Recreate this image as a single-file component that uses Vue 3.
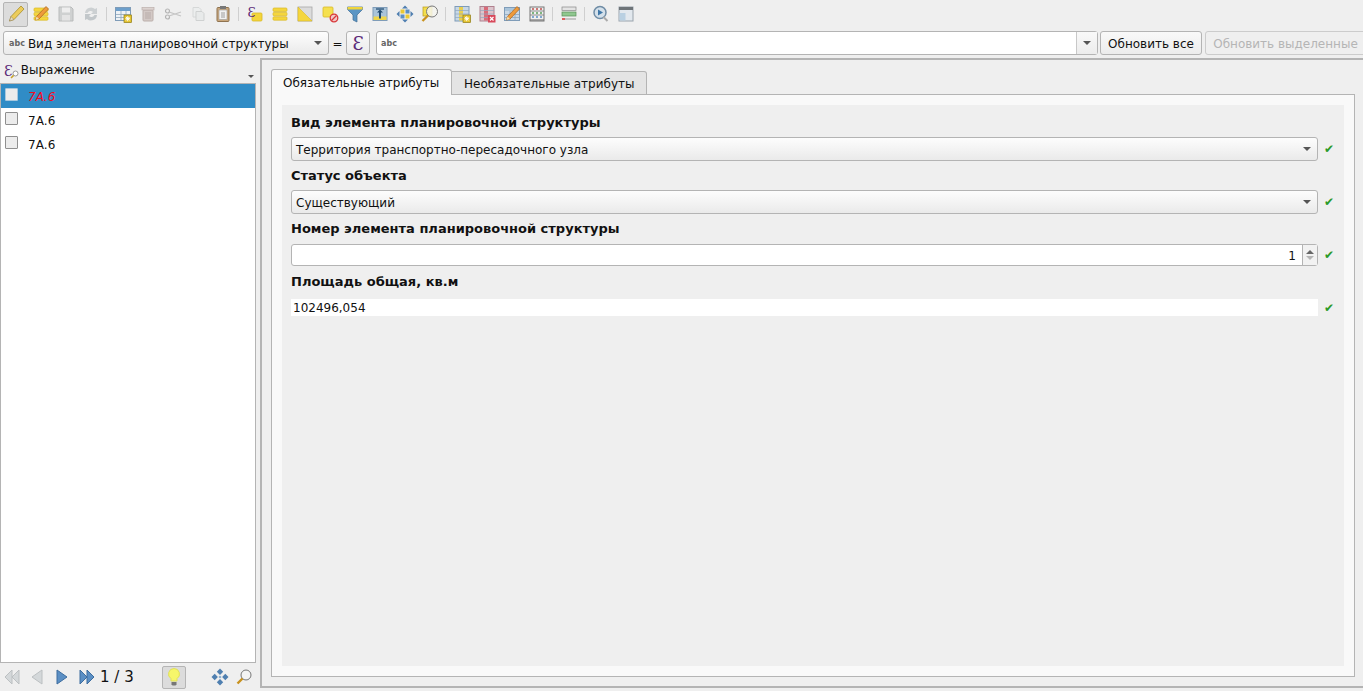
<template>
  <div class="window">
    <div class="toolbar">
      <template v-for="(t, i) in tools" :key="i">
        <span v-if="t === null" class="sep"></span>
        <button v-else class="tool" :class="{ active: i === 0 }">
          <svg width="20" height="20" viewBox="0 0 20 20" v-html="t"></svg>
        </button>
      </template>
    </div>

    <div class="updatebar">
      <div class="combo field-combo">
        <span class="abc">abc</span>
        <span class="combo-text">Вид элемента планировочной структуры</span>
        <span class="arrow"></span>
      </div>
      <span class="eq">=</span>
      <button class="btn eps-btn"><span class="eps">Ɛ</span></button>
      <div class="expr">
        <span class="abc abc-input">abc</span>
        <span class="expr-drop"><span class="arrow"></span></span>
      </div>
      <button class="btn update">Обновить все</button>
      <button class="btn update disabled">Обновить выделенные</button>
    </div>

    <div class="main">
      <aside class="side">
        <div class="side-head">
          <span class="eps small">Ɛ</span>
          <svg class="mini-lens" width="9" height="9" viewBox="0 0 9 9">
            <circle cx="5.5" cy="3.5" r="2.5" fill="#fff" stroke="#999" />
            <path d="M3.6 5.4 1 8" stroke="#c9a227" stroke-width="1.5" />
          </svg>
          <span class="side-title">Выражение</span>
          <span class="arrow tiny"></span>
        </div>
        <ul class="list">
          <li v-for="(r, i) in rows" :key="i" class="row" :class="{ selected: i === 0 }">
            <span class="check"></span>
            <span>{{ r }}</span>
          </li>
        </ul>
        <div class="nav">
          <svg width="20" height="20" viewBox="0 0 20 20"><path d="M10 3v14L3 10zM17 3v14l-7-7z" fill="#d4d8da" stroke="#bcc0c2" /></svg>
          <svg class="nav-prev" width="14" height="20" viewBox="0 0 14 20"><path d="M12 3v14L2 10z" fill="#d4d8da" stroke="#bcc0c2" /></svg>
          <svg class="nav-next" width="14" height="20" viewBox="0 0 14 20"><path d="M2 3v14l10-7z" fill="#5b8fc4" stroke="#3d6d9f" /></svg>
          <svg class="nav-last" width="20" height="20" viewBox="0 0 20 20"><path d="M3 3v14l7-7zM10 3v14l7-7z" fill="#5b8fc4" stroke="#3d6d9f" /></svg>
          <span class="counter">1 / 3</span>
          <button class="bulb">
            <svg width="18" height="20" viewBox="0 0 18 20">
              <path d="M9 1.500a5.500 5.500 0 0 0-3 10.100V14h6v-2.400A5.500 5.500 0 0 0 9 1.500z" fill="#f6f66a" stroke="#e0e05a" />
              <path d="M6.500 15h5v2.500l-1 1h-3l-1-1z" fill="#777" />
            </svg>
          </button>
          <svg class="nav-move" width="18" height="18" viewBox="0 0 18 18" v-html="moveIcon"></svg>
          <svg class="nav-zoom" width="18" height="18" viewBox="0 0 18 18">
            <circle cx="11" cy="7" r="5" fill="#f4f4f4" stroke="#777" />
            <path d="M7.500 10.500 2.500 15.500" stroke="#c9921e" stroke-width="2.400" />
          </svg>
        </div>
      </aside>

      <div class="splitter"><span class="grip"></span></div>

      <section class="content">
        <div class="tabs">
          <div class="tab on">Обязательные атрибуты</div>
          <div class="tab">Необязательные атрибуты</div>
        </div>
        <div class="pane">
          <div class="form">
            <div class="block">
              <div class="label">Вид элемента планировочной структуры</div>
              <div class="line">
                <div class="combo wide"><span class="combo-text">Территория транспортно-пересадочного узла</span><span class="arrow"></span></div>
                <span class="ok">✔</span>
              </div>
            </div>
            <div class="block">
              <div class="label">Статус объекта</div>
              <div class="line">
                <div class="combo wide"><span class="combo-text">Существующий</span><span class="arrow"></span></div>
                <span class="ok">✔</span>
              </div>
            </div>
            <div class="block">
              <div class="label">Номер элемента планировочной структуры</div>
              <div class="line">
                <div class="spin">
                  <span class="spin-val">1</span>
                  <span class="spin-btns"><i class="up"></i><i class="down"></i></span>
                </div>
                <span class="ok">✔</span>
              </div>
            </div>
            <div class="block">
              <div class="label">Площадь общая, кв.м</div>
              <div class="line">
                <div class="plain">102496,054</div>
                <span class="ok">✔</span>
              </div>
            </div>
          </div>
        </div>
      </section>
    </div>
  </div>
</template>

<script setup>
const rows = ['7А.6', '7А.6', '7А.6']

const moveIcon = `<path d="M9 .5l3.200 3.200L9 6.900 5.800 3.700zM9 17.500l-3.200-3.200L9 11.100l3.200 3.200zM.5 9l3.200-3.200L6.900 9l-3.200 3.200zM17.500 9l-3.200 3.200L11.100 9l3.200-3.200z" fill="#4f7fb0"/><circle cx="9" cy="9" r="1.300" fill="#8fb0d0"/>`
const table = (head, body) => `<rect x="2.500" y="3.500" width="15" height="13" fill="${body}" stroke="#7f9cb8"/><rect x="3" y="4" width="14" height="3" fill="${head}"/><path d="M3 10.500h14M3 13.500h14M8 7v9M13 7v9" stroke="#8fa7bd" stroke-width=".8"/>`
const yellowRows = `<rect x="3" y="4" width="14" height="3.400" rx="1" fill="#f5d63d" stroke="#d8b92a" stroke-width=".7"/><rect x="3" y="8.400" width="14" height="3.400" rx="1" fill="#f5d63d" stroke="#d8b92a" stroke-width=".7"/><rect x="3" y="12.800" width="14" height="3.400" rx="1" fill="#f5d63d" stroke="#d8b92a" stroke-width=".7"/>`
const star = `<rect x="11" y="11" width="7.500" height="7.500" fill="#e6c52f" stroke="#8d7a14" stroke-width=".7"/><path d="M14.700 12.200v5M12.400 14.700h4.600M13 13l3.400 3.400M16.400 13 13 16.400" stroke="#fff" stroke-width=".9"/>`
const pencil = `<path d="M15 2.500l2.500 2.500L8 15l-3.500 1 1-3.500z" fill="#ee9b3c" stroke="#a9611a" stroke-width=".7"/><path d="M5.500 12.500 8 15l-3.500 1z" fill="#f2dfb0"/>`
const columns = `<path d="M3 6.500h14M3 10h14M3 13.500h14" stroke="#8fa7bd" stroke-width=".7"/>`

const tools = [
  `<path d="M15 2l3 3L8 15.500l-4.500 1.500 1.500-4.500z" fill="#eccc5c" stroke="#aa8f2c" stroke-width=".8"/><path d="M5 12.500 8 15.500l-4.500 1.500z" fill="#e9dcc0" stroke="#8a7a5a" stroke-width=".5"/>`,
  yellowRows + pencil,
  `<path d="M3 3h12l2 2v12H3z" fill="#cfd1d1" stroke="#b9bbbb"/><rect x="6" y="3.500" width="8" height="5" fill="#eee"/><rect x="6" y="11" width="8" height="5.500" fill="#e4e4e4"/>`,
  `<path d="M4 9a6 6 0 0 1 10-4l2-1v6h-6l2-2a3.400 3.400 0 0 0-5.500 1z" fill="#ccd0d2"/><path d="M16 11a6 6 0 0 1-10 4l-2 1v-6h6l-2 2a3.400 3.400 0 0 0 5.500-1z" fill="#c2c7ca"/>`,
  null,
  table('#6d9fcb', '#eef2f6') + star,
  `<rect x="5" y="6" width="10" height="11" rx="1" fill="#d3c9c6" stroke="#bcb0ac"/><rect x="4" y="3.500" width="12" height="2.500" fill="#dcd3d0" stroke="#bcb0ac" stroke-width=".7"/><path d="M8 8v7M10 8v7M12 8v7" stroke="#b3a6a2" stroke-width=".8"/>`,
  `<circle cx="4.500" cy="7" r="2" fill="none" stroke="#b4b4b4" stroke-width="1.200"/><circle cx="4.500" cy="13" r="2" fill="none" stroke="#b4b4b4" stroke-width="1.200"/><path d="M6 8l12 4M6 12l12-4" stroke="#c4c4c4" stroke-width="1.300"/>`,
  `<path d="M5 3.500h6l2 2V13H5z" fill="#eceeee" stroke="#d6d8d8"/><path d="M8 7.500h6l2 2v7H8z" fill="#e8eaea" stroke="#cfd1d1"/>`,
  `<rect x="4" y="3.500" width="12" height="14" rx="1" fill="#c9a77c" stroke="#8f7350"/><rect x="6" y="6" width="8" height="9.500" fill="#f2f2f2" stroke="#9b9b9b" stroke-width=".6"/><rect x="7" y="2" width="6" height="3" fill="#777"/><path d="M8 9h4M8 11h4M8 13h4" stroke="#888" stroke-width=".8"/>`,
  null,
  `<rect x="7" y="9" width="10" height="8" rx="1" fill="#f3d53a" stroke="#d8b92a" stroke-width=".8"/><text x="2.500" y="13" font-family="DejaVu Serif, serif" font-size="13" fill="#5b2a78">Ɛ</text>`,
  yellowRows,
  `<rect x="3" y="3" width="14" height="14" fill="#dcdcdc" stroke="#a8a8a8" stroke-width=".8"/><path d="M3 3l14 14H3z" fill="#f5d63d" stroke="#d8b92a" stroke-width=".6"/>`,
  `<rect x="3" y="3" width="10" height="10" rx="1" fill="#f5e04f" stroke="#d8b92a" stroke-width=".8"/><circle cx="14" cy="14" r="3.800" fill="#f0c8c8" stroke="#d8383a" stroke-width="1.300"/><path d="M11.500 16.500l5-5" stroke="#d8383a" stroke-width="1.200"/>`,
  `<path d="M2.500 3h15v2.500L12 11v7l-4-2v-5L2.500 5.500z" fill="#5a95c4" stroke="#3f6e96" stroke-width=".7"/><path d="M2.500 3h15v2.500h-15z" fill="#f0d53c"/>`,
  `<rect x="3" y="3.500" width="14" height="13" fill="#a9c4da" stroke="#7f9cb8"/><rect x="3.500" y="12.500" width="13" height="3.500" fill="#efd64a"/><path d="M6 5h8" stroke="#1f4a70" stroke-width="1.200"/><path d="M10 5.500l3 3h-2v6H9v-6H7z" fill="#1f4a70"/>`,
  `<path d="M10 1.500l3 3h-6zM10 18.500l-3-3h6zM1.500 10l3-3v6zM18.500 10l-3 3V7z" fill="#4f7fb0"/><rect x="5.500" y="5.500" width="4" height="4" fill="#e9c934"/><rect x="10.500" y="5.500" width="4" height="4" fill="#5b8fc4"/><rect x="5.500" y="10.500" width="4" height="4" fill="#5b8fc4"/><rect x="10.500" y="10.500" width="4" height="4" fill="#e9c934"/>`,
  `<rect x="3" y="3" width="9" height="9" fill="#f3de4d" stroke="#b99a1c" stroke-width=".7"/><circle cx="12" cy="7.500" r="5.500" fill="#f4f4ee" fill-opacity=".85" stroke="#7a7a7a"/><path d="M8 11.500 2.500 17" stroke="#c9921e" stroke-width="2.300"/>`,
  null,
  `<rect x="3" y="2.500" width="14" height="14.500" fill="#c8d8e6" stroke="#7f9cb8"/><rect x="7" y="3" width="4" height="13.500" fill="#e8cf52"/>` + columns + star,
  `<rect x="3" y="2.500" width="14" height="14.500" fill="#dcc5cc" stroke="#b0808e"/><rect x="7" y="3" width="4" height="13.500" fill="#d96a78"/>` + columns + `<rect x="11" y="11" width="7.500" height="7.500" fill="#d8485a"/><path d="M13 13l3.500 3.500M16.500 13 13 16.500" stroke="#fff" stroke-width="1.200"/>`,
  table('#a9c4da', '#c8d8e6') + pencil,
  `<rect x="3" y="3" width="14" height="14" fill="#f0f0f0" stroke="#777"/><path d="M3 7h14M3 11h14" stroke="#777" stroke-width=".8"/><path d="M5 5h2M9 5h2M13 5h2" stroke="#c0504d" stroke-width="1.600"/><path d="M5 9h2M9 9h2M13 9h2" stroke="#58a05a" stroke-width="1.600"/><path d="M5 13h2M9 13h2M13 13h2" stroke="#5b8fc4" stroke-width="1.600"/><path d="M3 16h14" stroke="#777" stroke-width="1.200"/>`,
  null,
  `<rect x="3" y="3" width="14" height="3.500" fill="#e4e4e4" stroke="#888" stroke-width=".7"/><rect x="3" y="8" width="14" height="4" fill="#8fc78f" stroke="#5a8f5a" stroke-width=".7"/><path d="M3 15h3" stroke="#d8383a" stroke-width="1.600"/><path d="M6 15h11" stroke="#999" stroke-width="1"/>`,
  null,
  `<circle cx="9" cy="8.500" r="6" fill="#d4e0ea" stroke="#6f8ca5" stroke-width="1.500"/><path d="M7 5.500v6l5-3z" fill="#3f77a8"/><path d="M12.500 13l4 4" stroke="#aaa" stroke-width="2"/>`,
  `<rect x="3" y="3" width="14" height="14" fill="#e2e8ee" stroke="#9aa4ad"/><rect x="3" y="3" width="14" height="3" fill="#6e7478"/><rect x="3.500" y="9" width="6" height="7.500" fill="#b9d0e2"/>`,
]
</script>

<style>
html, body { margin: 0; background: #efefef; overflow: hidden; }
</style>

<style scoped>
.window {
  width: 1363px;
  height: 691px;
  overflow: hidden;
  background: #efefef;
  display: flex;
  flex-direction: column;
  font-family: "DejaVu Sans", sans-serif;
  font-size: 12px;
  color: #111;
}
.toolbar {
  height: 28px;
  padding: 0 0 0 3px;
  display: flex;
  align-items: center;
  box-sizing: border-box;
}
.tool {
  width: 25px;
  height: 25px;
  padding: 0;
  border: 1px solid transparent;
  border-radius: 2px;
  background: none;
  display: flex;
  align-items: center;
  justify-content: center;
}
.tool.active { background: #dcdcdc; border-color: #b5b5b5; }
.sep { width: 1px; height: 14px; margin: 0 3px; background: #cfcfcf; }

.updatebar {
  height: 24px;
  margin-top: 3px;
  padding-left: 3px;
  display: flex;
  align-items: stretch;
}
.updatebar > * { flex: none; }
.combo {
  box-sizing: border-box;
  display: flex;
  align-items: center;
  border: 1px solid #b4b4b4;
  border-radius: 3px;
  background: linear-gradient(#fdfdfd, #eaeaea);
  padding: 0 6px 0 4px;
}
.field-combo { width: 326px; padding-left: 5px; }
.abc { font-size: 8px; font-weight: 700; color: #666; margin-right: 3px; }
.combo-text { flex: 1; white-space: nowrap; padding-top: 1px; }
.arrow {
  width: 0;
  height: 0;
  border-left: 4px solid transparent;
  border-right: 4px solid transparent;
  border-top: 4px solid #555;
}
.arrow.tiny { border-width: 3px 3px 0; margin: 12px 2px 0 auto; }
.eq { width: 17px; text-align: center; line-height: 26px; }
.btn {
  box-sizing: border-box;
  border: 1px solid #b4b4b4;
  border-radius: 3px;
  background: linear-gradient(#f9f9f9, #ececec);
  font: inherit;
  color: #111;
  padding: 1px 0 0;
}
.eps-btn { width: 24px; }
.eps { font-family: "DejaVu Serif", serif; font-size: 18px; color: #5b2a78; line-height: 1; }
.eps.small { font-size: 14px; margin-left: 4px; }
.expr {
  box-sizing: border-box;
  width: 722px;
  margin-left: 6px;
  border: 1px solid #b4b4b4;
  border-radius: 3px;
  background: #fff;
  display: flex;
  align-items: center;
  justify-content: space-between;
  padding-left: 4px;
}
.abc-input { margin: 0; }
.expr-drop {
  width: 20px;
  height: 100%;
  border-left: 1px solid #c8c8c8;
  background: linear-gradient(#f9f9f9, #ececec);
  display: flex;
  align-items: center;
  justify-content: center;
}
.update { margin-left: 2px; width: 102px; }
.update.disabled { margin-left: 3px; width: 161px; color: #b5b5b5; border-color: #ccc; background: #efefef; }

.main { flex: 1; min-height: 0; display: flex; margin-top: 3px; }
.side { width: 256px; display: flex; flex-direction: column; flex: none; }
.side-head {
  height: 25px;
  flex: none;
  display: flex;
  align-items: center;
  box-sizing: border-box;
}
.mini-lens { align-self: flex-end; margin: 0 1px 4px -3px; }
.side-title { margin: 0 0 1px 1px; }
.list {
  flex: 1;
  list-style: none;
  margin: 0;
  padding: 0;
  background: #fff;
  border: 1px solid #b4b4b4;
}
.row { height: 24px; box-sizing: border-box; display: flex; align-items: center; padding: 2px 0 0 27px; position: relative; }
.row.selected { background: #308cc6; color: #f50a1e; font-style: italic; }
.check {
  position: absolute;
  left: 4px;
  top: 4px;
  width: 11px;
  height: 11px;
  background: #ececec;
  border: 1px solid #8f8f8f;
  border-radius: 1px;
}
.row.selected .check { border-color: #a8c8de; }
.nav { height: 28px; display: flex; align-items: center; padding-left: 2px; box-sizing: border-box; flex: none; }
.nav > svg { flex: none; }
.nav-prev { margin-left: 8px; }
.nav-next { margin-left: 11px; }
.nav-last { margin-left: 8px; }
.counter { font-size: 15px; margin-left: 3px; width: 62px; flex: none; color: #111; white-space: nowrap; }
.bulb {
  width: 24px;
  height: 23px;
  flex: none;
  padding: 0;
  background: #dcdcdc;
  border: 1px solid #b5b5b5;
  border-radius: 2px;
  display: flex;
  align-items: center;
  justify-content: center;
}
.nav-move { margin-left: 25px; }
.nav-zoom { margin-left: 6px; }

.splitter { width: 4px; flex: none; display: flex; align-items: center; justify-content: center; }
.grip { width: 2px; height: 14px; background-image: radial-gradient(#aaa 40%, transparent 45%); background-size: 2px 2px; }
.content {
  flex: 1;
  box-sizing: border-box;
  margin-bottom: 3px;
  border: 2px solid #b4b4b4;
  border-right: none;
  padding: 9px 8px 9px 9px;
  display: flex;
  flex-direction: column;
}
.tabs { display: flex; align-items: flex-end; height: 26px; flex: none; position: relative; z-index: 1; margin-bottom: -1px; }
.tab {
  box-sizing: border-box;
  height: 24px;
  width: 195px;
  padding-left: 12px;
  line-height: 25px;
  background: #e4e4e4;
  border: 1px solid #b4b4b4;
  border-left: none;
  border-radius: 0 3px 0 0;
}
.tab.on {
  height: 26px;
  width: 181px;
  padding-left: 11px;
  line-height: 27px;
  background: #f9f9f9;
  border-left: 1px solid #b4b4b4;
  border-bottom: none;
  border-radius: 3px 3px 0 0;
}
.pane {
  flex: 1;
  min-height: 0;
  background: #f9f9f9;
  border: 1px solid #b4b4b4;
  padding: 10px;
  display: flex;
}
.form { flex: 1; background: #efefef; padding: 9px 4px 0 9px; box-sizing: border-box; }
.block { height: 53px; }
.label { height: 18px; line-height: 18px; font-size: 13px; font-weight: 700; margin-bottom: 5px; color: #111; }
.line { height: 24px; display: flex; align-items: center; }
.wide { flex: 1; height: 24px; padding-left: 4px; }
.spin {
  flex: 1;
  height: 22px;
  box-sizing: border-box;
  background: #fff;
  border: 1px solid #b4b4b4;
  border-radius: 3px;
  display: flex;
  justify-content: flex-end;
  align-items: center;
}
.spin-val { margin: 1px 6px 0 0; }
.spin-btns {
  width: 14px;
  height: 100%;
  border-left: 1px solid #b4b4b4;
  background: #f2f2f2;
  display: flex;
  flex-direction: column;
  align-items: center;
  justify-content: center;
  gap: 2px;
}
.spin-btns i { width: 0; height: 0; border-left: 4px solid transparent; border-right: 4px solid transparent; }
.up { border-bottom: 4px solid #666; }
.down { border-top: 4px solid #b5b5b5; }
.plain { flex: 1; height: 17px; line-height: 19px; margin-top: -2px; background: #fff; padding-left: 2px; }
.ok { width: 22px; flex: none; text-align: center; color: #2a9a2a; font-size: 12px; }
</style>
